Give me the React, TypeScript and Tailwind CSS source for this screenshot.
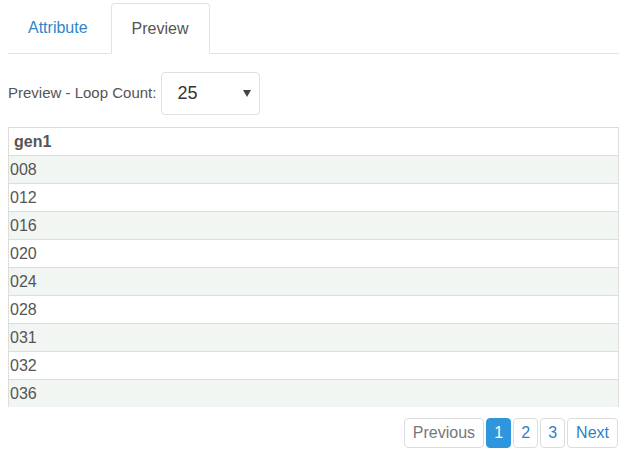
import { useState } from "react";

const rows = ["008", "012", "016", "020", "024", "028", "031", "032", "036"];

export default function App() {
  const [tab, setTab] = useState("preview");
  const [page, setPage] = useState(1);

  return (
    <div className="w-[633px] h-[462px] bg-white text-[#555] font-['Liberation_Sans',Arial,sans-serif] pl-2 pr-[14px] pt-[3px]">
      {/* Tabs */}
      <div className="flex gap-[3px] border-b border-[#e3e3e3]">
        <button
          onClick={() => setTab("attribute")}
          className="px-5 h-[50px] text-[16px] text-[#2f86c8]"
        >
          Attribute
        </button>
        <button
          onClick={() => setTab("preview")}
          className="px-5 h-[51px] -mb-px text-[16px] text-[#555] bg-white border border-[#e3e3e3] border-b-white rounded-t"
        >
          Preview
        </button>
      </div>

      {/* Loop count */}
      <div className="flex items-center gap-[5px] mt-[18px]">
        <span className="text-[15px] text-[#555]">Preview - Loop Count:</span>
        <div className="relative w-[99px] h-[43px] border border-[#e0e0e0] rounded flex items-center pl-[15px]">
          <span className="text-[18px] text-[#333]">25</span>
          <span className="absolute right-[8px] top-[17px] w-0 h-0 border-l-[4px] border-r-[4px] border-t-[7px] border-l-transparent border-r-transparent border-t-[#444]" />
        </div>
      </div>

      {/* Table */}
      <div className="mt-3 h-[280px] overflow-hidden border border-b-0 border-[#ddd]">
        <div className="h-[28px] flex items-center px-[5px] border-b border-[#ddd] font-bold text-[16px] text-[#555]">
          gen1
        </div>
        {rows.map((r, i) => (
          <div
            key={r}
            className={`h-[28px] flex items-center pl-[1px] border-b border-[#ddd] text-[16px] text-[#555] ${
              i % 2 === 0 ? "bg-[#f2f6f3]" : "bg-white"
            }`}
          >
            {r}
          </div>
        ))}
      </div>

      {/* Pagination */}
      <div className="flex justify-end gap-[2px] mt-[11px] mr-px text-[16px]">
        <button className="h-[30px] px-2 border border-[#ddd] rounded text-[#777]">Previous</button>
        {[1, 2, 3].map((n) => (
          <button
            key={n}
            onClick={() => setPage(n)}
            className={
              n === page
                ? "h-[30px] w-[25px] border border-[#2f95dc] bg-[#2f95dc] text-white rounded"
                : "h-[30px] w-[25px] border border-[#ddd] text-[#2f7fc4] rounded"
            }
          >
            {n}
          </button>
        ))}
        <button className="h-[30px] px-2 border border-[#ddd] rounded text-[#2f7fc4]">Next</button>
      </div>
    </div>
  );
}
